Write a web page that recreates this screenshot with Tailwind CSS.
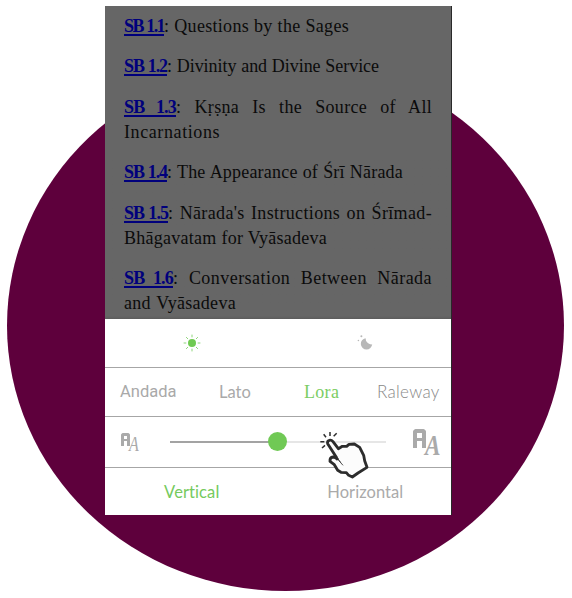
<!DOCTYPE html>
<html lang="en">
<head>
<meta charset="utf-8">
<title>Reader settings</title>
<script src="https://cdn.jsdelivr.net/npm/@tailwindcss/browser@4"></script>
</head>
<body class="bg-white">
<main class="relative h-[598px] w-[572px] overflow-hidden pt-[6px] pl-[105px]">
  <div class="absolute top-[60px] left-[7px] h-[531px] w-[557px] rounded-[50%] bg-[#5e003c]"></div>

  <div class="relative flex h-[509px] w-[347px] flex-col overflow-hidden bg-white">
    <section class="flex h-[313px] flex-col gap-[16.4px] bg-[#666] bg-linear-to-b from-[#666] from-99% to-[#5c5c5c] pt-[7.5px] pl-[19px] font-['Liberation_Serif',serif] text-[18px] leading-[24.4px] whitespace-nowrap text-[#0b0b0b] [text-align-last:justify]">
      <p class="flex"><a class="w-[40px] font-bold tracking-[-1.6px] text-[#00007c] underline decoration-2 underline-offset-2">SB 1.1</a><span class="w-[185px] tracking-[0.3px]">: Questions by the Sages</span></p>
      <p class="flex"><a class="w-[43px] font-bold tracking-[-1.1px] text-[#00007c] underline decoration-2 underline-offset-2">SB 1.2</a><span class="w-[212px] tracking-[-0.05px]">: Divinity and Divine Service</span></p>
      <div>
        <p class="flex"><a class="w-[52px] font-bold tracking-[-0.8px] text-[#00007c] underline decoration-2 underline-offset-2">SB 1.3</a><span class="w-[256px] tracking-[0.3px]">: Kṛṣṇa Is the Source of All</span></p>
        <p class="w-[96px] tracking-[0.6px]">Incarnations</p>
      </div>
      <p class="flex"><a class="w-[43px] font-bold tracking-[-1.1px] text-[#00007c] underline decoration-2 underline-offset-2">SB 1.4</a><span class="w-[236px] tracking-[0.2px]">: The Appearance of Śrī Nārada</span></p>
      <div>
        <p class="flex"><a class="w-[44px] font-bold tracking-[-0.95px] text-[#00007c] underline decoration-2 underline-offset-2">SB 1.5</a><span class="w-[264px] tracking-[0.35px]">: Nārada's Instructions on Śrīmad-</span></p>
        <p class="w-[203px] tracking-[0.25px]">Bhāgavatam for Vyāsadeva</p>
      </div>
      <div>
        <p class="flex"><a class="w-[49px] font-bold tracking-[-0.8px] text-[#00007c] underline decoration-2 underline-offset-2">SB 1.6</a><span class="w-[259px] tracking-[0.45px]">: Conversation Between Nārada</span></p>
        <p class="w-[112px] tracking-[0.3px]">and Vyāsadeva</p>
      </div>
    </section>

    <section class="grid h-[49px] grid-cols-2 border-b border-[#a6a6a6]">
      <div class="flex justify-center pt-[15px]">
        <svg class="h-[18px] w-[18px]" viewBox="0 0 18 18" fill="none" stroke="#8ed57a" stroke-width="1">
          <circle cx="9" cy="9" r="4" fill="#6fca52" stroke="none"/>
          <path d="M9 .6v2.7M9 14.7v2.7M.6 9h2.7M14.7 9h2.7M3.1 3.1l1.9 1.9M13 13l1.9 1.9M14.9 3.1L13 5M5 13l-1.9 1.9"/>
        </svg>
      </div>
      <div class="flex justify-center pt-[15px]">
        <svg class="h-[18px] w-[18px]" viewBox="0 0 18 18" fill="#b8b8b8">
          <path d="M9.6 4.2A5.7 5.7 0 1 0 16.2 10.3Q14 10.8 11.8 9Q9.4 7 9.6 4.2Z"/>
          <circle cx="5.4" cy="2.2" r="1"/><circle cx="2.4" cy="6.5" r=".8"/>
        </svg>
      </div>
    </section>

    <section class="flex h-[49px] items-center border-b border-[#a6a6a6] pl-[15px] text-[17px] leading-6 whitespace-nowrap text-[#a9a9a9]">
      <span class="w-[99px] font-['Roboto',sans-serif] text-[16.5px]">Andada</span>
      <span class="w-[85px] font-[Lato,sans-serif] text-[16.5px]">Lato</span>
      <span class="w-[73px] font-['Liberation_Serif',serif] text-[18px] tracking-[0.3px] text-[#7bcd63]">Lora</span>
      <span class="font-[Lato,sans-serif] text-[17px] font-light tracking-[0.3px] text-[#888]">Raleway</span>
    </section>

    <section class="relative flex h-[51px] items-start border-b border-[#a6a6a6] text-[#aaa]">
      <div class="relative mt-[16px] ml-[16px] h-[19px] w-[49px]">
        <div class="h-[13px] w-[9px] rounded-t-[3px] border-[3px] border-b-0 border-[#aaa] pt-[3px]"><div class="h-[2px] bg-[#aaa]"></div></div>
        <span class="absolute top-[3px] left-[8px] origin-left scale-x-80 font-['Liberation_Serif',serif] text-[20px] leading-[16px] italic">A</span>
      </div>
      <div class="relative mt-[24px] h-[2px] w-[216px] bg-[#e6e6e6]">
        <div class="h-[2px] w-[108px] bg-[#a3a3a3]"></div>
        <div class="absolute top-[-9px] left-[98px] h-[19px] w-[19px] rounded-full bg-[#70c955]"></div>
      </div>
      <div class="relative mt-[12px] ml-[27px] h-[27px] w-[30px]">
        <div class="h-[19px] w-[13px] rounded-t-[4px] border-4 border-b-0 border-[#aaa] pt-[5px]"><div class="h-[3px] bg-[#aaa]"></div></div>
        <span class="absolute top-[5px] left-[12px] origin-left scale-x-80 font-['Liberation_Serif',serif] text-[29px] leading-[22px] font-bold italic">A</span>
      </div>
      <svg class="absolute top-[8px] left-[205px] z-10 h-[60px] w-[70px]" viewBox="0 0 210 180" fill="none" stroke="#2c2c2c" stroke-width="8.5" stroke-linejoin="round">
        <path fill="#fcfcfc" d="M81 100L53 56Q51 48 58 46Q64 44 69 50L85 71L97 64L110 64L117 58L133 57L149 67L161 91L164 107L171 127L144 144L127 156L116 151L109 143L93 142L83 136L73 119L60 109Q59 97 69 96Q76 96 84 104"/>
        <path stroke-width="2.5" d="M78 94L86 106L99 121M84 102L92 112"/>
        <path stroke-width="4.5" d="M31 50h12M36 69l9-8M41 28l7 9M60 21v12M80 25l-9 9"/>
      </svg>
    </section>

    <section class="grid h-[47px] grid-cols-2 place-items-center font-[Lato,sans-serif] text-[16.5px] leading-6 text-[#aaa]">
      <span class="tracking-[0.1px] text-[#75ca5d]">Vertical</span>
      <span class="tracking-[0.05px]">Horizontal</span>
    </section>
    <div class="absolute inset-y-0 right-0 w-px bg-[#292929]"></div>
  </div>
</main>
</body>
</html>
